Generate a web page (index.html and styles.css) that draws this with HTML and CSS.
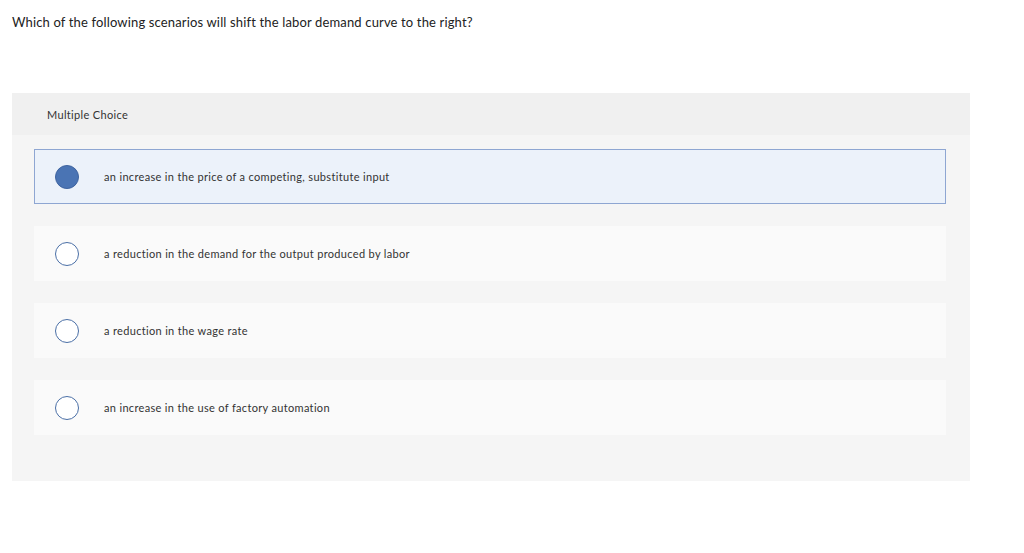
FILE: index.html
```html
<!DOCTYPE html>
<html>
<head>
<meta charset="utf-8">
<link rel="stylesheet" href="styles.css">
</head>
<body>
<p class="question">Which of the following scenarios will shift the labor demand curve to the right?</p>
<div class="panel">
  <div class="panel-head">Multiple Choice</div>
  <div class="panel-body">
    <div class="option selected"><span class="radio"></span><span class="label">an increase in the price of a competing, substitute input</span></div>
    <div class="option"><span class="radio"></span><span class="label">a reduction in the demand for the output produced by labor</span></div>
    <div class="option"><span class="radio"></span><span class="label">a reduction in the wage rate</span></div>
    <div class="option"><span class="radio"></span><span class="label">an increase in the use of factory automation</span></div>
  </div>
</div>
</body>
</html>
```
FILE: styles.css
```css
* { box-sizing: border-box; }
body {
  margin: 0;
  background: #fff;
  font-family: Lato, "Open Sans", sans-serif;
  color: #333;
}
.question {
  margin: 0;
  padding: 14px 0 0 12px;
  font-size: 13px;
  line-height: 16px;
  letter-spacing: 0.15px;
  color: #222;
}
.panel {
  margin: 63px 0 0 12px;
  width: 958px;
  background: #f5f5f5;
}
.panel-head {
  height: 42px;
  background: #f0f0f0;
  padding-left: 35px;
  display: flex;
  align-items: center;
  font-size: 11px;
  letter-spacing: 0.33px;
  color: #333;
}
.panel-body {
  padding: 14px 24px 46px 22px;
  display: flex;
  flex-direction: column;
  gap: 22px;
}
.option {
  height: 55px;
  background: #fafafa;
  border: 1px solid transparent;
  display: flex;
  align-items: center;
  padding-left: 20px;
  font-size: 11px;
  letter-spacing: 0.33px;
  color: #333;
}
.option.selected {
  background: #ecf2fa;
  border-color: #8ea6d2;
}
.radio {
  width: 24px;
  height: 24px;
  border-radius: 50%;
  border: 1px solid #4a6fa6;
  background: #fff;
  flex: none;
}
.selected .radio {
  background: #4a74b4;
  border-color: #3f64a0;
}
.label {
  margin-left: 25px;
}
```
